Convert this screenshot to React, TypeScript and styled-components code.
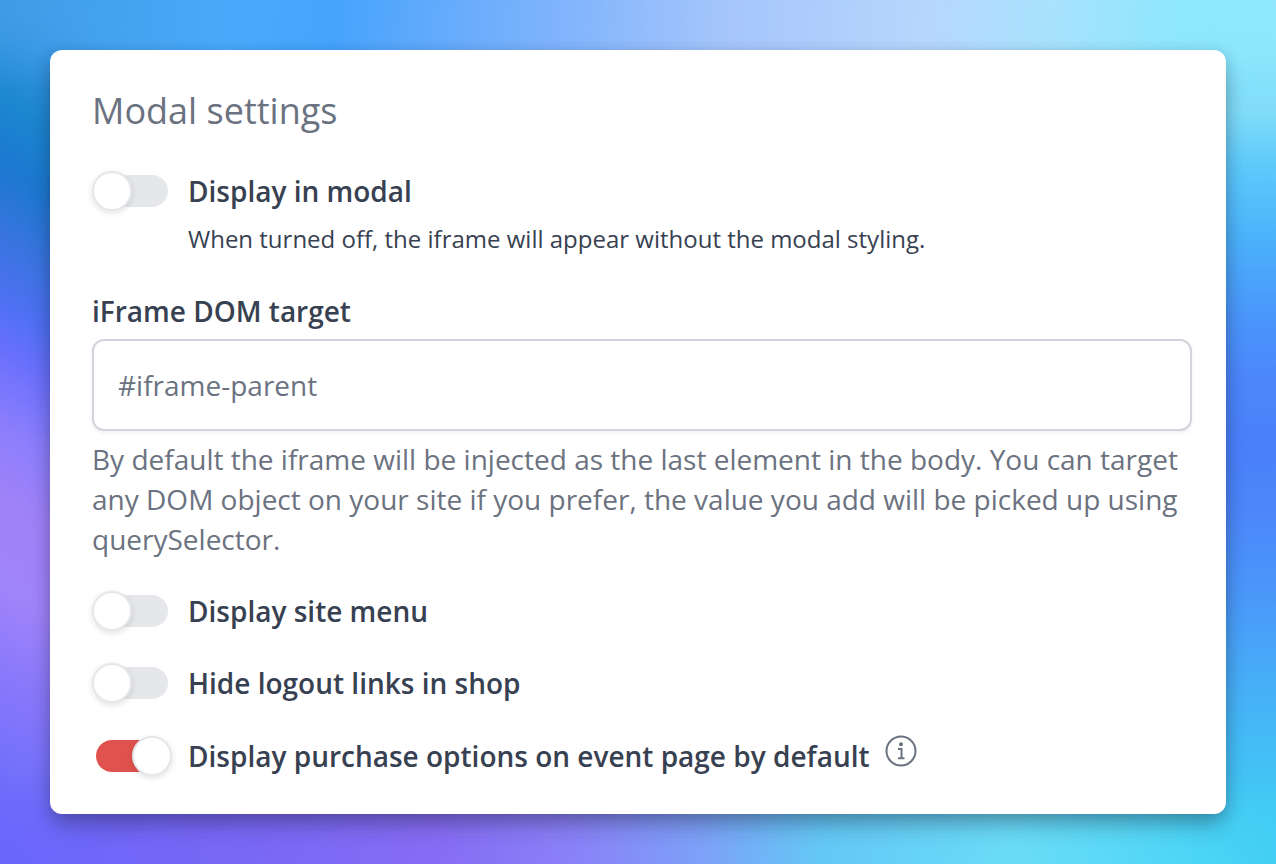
import React, { useId, useState } from "react";
import styled, { createGlobalStyle } from "styled-components";

const GlobalStyle = createGlobalStyle`
  *, *::before, *::after { box-sizing: border-box; }
  body {
    margin: 0;
    font-family: "Open Sans", "Noto Sans", sans-serif;
    color: #374151;
  }
`;

const Page = styled.div`
  position: relative;
  isolation: isolate;
  min-height: 100vh;
  padding: 50px;
  background:
    linear-gradient(210deg, #49aaf4 0%, #409ce8 7%, #1c86d0 18%, #1c78d0 25%, #3a74e0 33%, #5070f4 40%, #6a70fc 45%, #8c7efc 53%, #a082f8 61%, #a084fa 70%, #8878fb 80%, #706ffb 91%, #6a66fb 100%) left / 120px 100% no-repeat,
    linear-gradient(180deg, #8fe8fd 0%, #88e4fd 7%, #80dcf8 13%, #5ecafb 19%, #4cb4fb 27%, #4a98fb 36%, #4c86fb 44%, #4a80fb 52%, #4c88fa 60%, #4a98fa 69%, #48a8f8 76%, #44bcf6 86%, #42ccf4 95%) right / 120px 100% no-repeat;

  &::before, &::after {
    content: "";
    position: absolute;
    left: 0;
    right: 0;
    height: 90px;
    z-index: -1;
  }
  &::before {
    top: 0;
    background: linear-gradient(95deg, #3f9be4 0%, #49aafb 18%, #45a4fc 26%, #62aafc 34%, #80b4fc 44%, #a6c6fb 57%, #b6d8fd 73%, #a8e2fd 82%, #8de7fd 92%, #8fe8fd 100%);
    mask-image:
      linear-gradient(180deg, #000 0, transparent 90px),
      linear-gradient(90deg, transparent 50px, #000 110px calc(100% - 110px), transparent calc(100% - 50px));
  }
  &::after {
    bottom: 0;
    background: linear-gradient(85deg, #6a66fb 0%, #7868f6 18%, #866cf4 34%, #8a82f8 45%, #7ca2f8 55%, #64c8f6 64%, #6adcf8 79%, #4fd6f6 92%, #42cdf4 100%);
    mask-image:
      linear-gradient(0deg, #000 0, transparent 90px),
      linear-gradient(90deg, transparent 50px, #000 110px calc(100% - 110px), transparent calc(100% - 50px));
  }
`;

const Card = styled.form`
  display: flex;
  flex-direction: column;
  padding: 36px 34px 37px 42px;
  background: #fff;
  border-radius: 12px;
  box-shadow: 0 14px 24px -4px rgba(20, 20, 40, 0.28), 0 4px 16px rgba(20, 20, 40, 0.2);
`;

const Title = styled.h1`
  margin: 0 0 35px;
  font-size: 36px;
  line-height: 50px;
  font-weight: 400;
  color: #6b7280;
`;

const Setting = styled.div`
  display: grid;
  grid-template-columns: 76px 1fr;
  column-gap: 20px;
  align-items: center;
`;

const SettingLine = styled.div<{ $tall?: boolean }>`
  display: flex;
  align-items: center;
  gap: 15px;
  min-height: ${({ $tall }) => ($tall ? 42 : 40)}px;
`;

const Label = styled.label`
  font-size: 28px;
  line-height: 40px;
  font-weight: 600;
`;

const Hint = styled.p`
  grid-column: 2;
  margin: 10px 0 0;
  font-size: 24px;
  line-height: 36px;
`;

const Switch = styled.input`
  appearance: none;
  display: flex;
  align-items: center;
  width: 72px;
  height: 32px;
  margin: 0 0 0 4px;
  border-radius: 16px;
  background: #e5e7eb;
  cursor: pointer;

  &::before {
    content: "";
    flex: none;
    width: 40px;
    height: 40px;
    margin-left: -4px;
    border: 2px solid #e5e7eb;
    border-radius: 50%;
    background: #fff;
    box-shadow: 0 2px 6px rgba(0, 0, 0, 0.12);
  }
  &:checked { background: #df524d; }
  &:checked::before { margin-left: 36px; }
`;

const Field = styled.div`
  display: flex;
  flex-direction: column;
  margin: 34px 0 32px;
`;

const TextInput = styled.input`
  width: 100%;
  height: 92px;
  margin: 8px 0;
  padding: 0 24px;
  border: 2px solid #d1d5db;
  border-radius: 12px;
  background: #fff;
  box-shadow: 0 2px 4px rgba(0, 0, 0, 0.06);
  font-family: inherit;
  font-size: 28px;
  color: #374151;

  &::placeholder { color: #6b7280; opacity: 1; }
`;

const Help = styled.p`
  margin: 0;
  font-size: 28px;
  line-height: 40px;
  color: #6b7280;
`;

const SettingList = styled.div`
  display: flex;
  flex-direction: column;
  gap: 32px;
`;

const InfoButton = styled.button`
  display: flex;
  align-self: flex-start;
  padding: 0;
  border: 0;
  background: none;
  color: #6b7280;
  cursor: pointer;
`;

const InfoIcon = () => (
  <svg width="32" height="32" viewBox="0 0 32 32" fill="none" stroke="currentColor" strokeWidth="2" aria-hidden="true">
    <circle cx="16" cy="16" r="14.5" />
    <circle cx="16" cy="9.2" r="2" fill="currentColor" stroke="none" />
    <path d="M13 14H16.5V23.2M13 23.2H19.5" />
  </svg>
);

interface ToggleProps {
  label: string;
  hint?: string;
  initial?: boolean;
  info?: boolean;
}

const ToggleSetting = ({ label, hint, initial = false, info }: ToggleProps) => {
  const id = useId();
  const [on, setOn] = useState(initial);
  return (
    <Setting>
      <Switch
        id={id}
        type="checkbox"
        role="switch"
        checked={on}
        aria-describedby={hint ? `${id}-hint` : undefined}
        onChange={(e) => setOn(e.target.checked)}
      />
      <SettingLine $tall={info}>
        <Label htmlFor={id}>{label}</Label>
        {info && (
          <InfoButton type="button" aria-label="More information">
            <InfoIcon />
          </InfoButton>
        )}
      </SettingLine>
      {hint && <Hint id={`${id}-hint`}>{hint}</Hint>}
    </Setting>
  );
};

export default function App() {
  return (
    <>
      <GlobalStyle />
      <Page>
        <Card onSubmit={(e) => e.preventDefault()}>
          <Title>Modal settings</Title>
          <ToggleSetting label="Display in modal" hint="When turned off, the iframe will appear without the modal styling." />
          <Field>
            <Label htmlFor="dom-target">iFrame DOM target</Label>
            <TextInput id="dom-target" type="text" placeholder="#iframe-parent" aria-describedby="dom-target-help" />
            <Help id="dom-target-help">
              By default the iframe will be injected as the last element in the body. You can target any DOM object on
              your site if you prefer, the value you add will be picked up using querySelector.
            </Help>
          </Field>
          <SettingList>
            <ToggleSetting label="Display site menu" />
            <ToggleSetting label="Hide logout links in shop" />
            <ToggleSetting label="Display purchase options on event page by default" initial info />
          </SettingList>
        </Card>
      </Page>
    </>
  );
}
